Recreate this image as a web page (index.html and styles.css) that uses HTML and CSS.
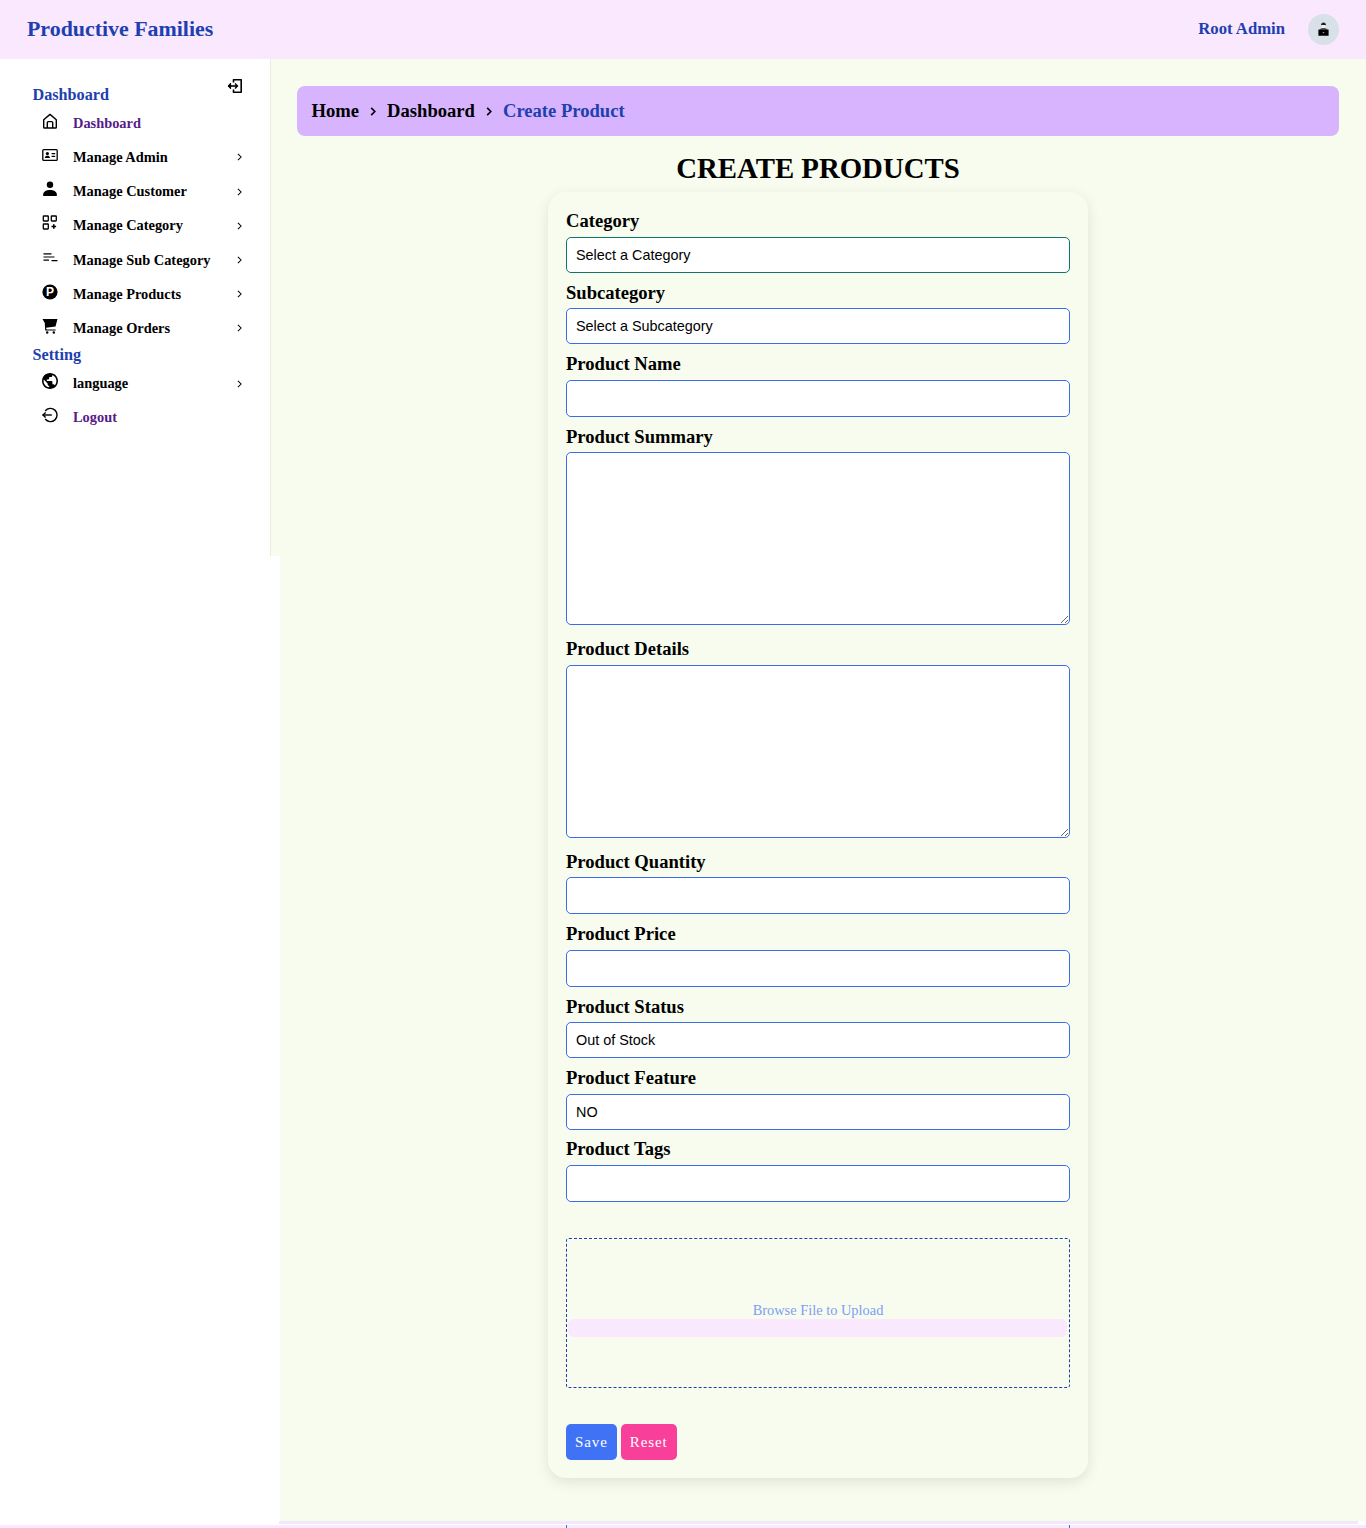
FILE: index.html
```html
<!DOCTYPE html>
<html lang="en">
<head>
  <meta charset="UTF-8" />
  <meta name="viewport" content="width=device-width, initial-scale=1" />
  <title>Productive Families</title>
  <link rel="stylesheet" href="styles.css">
</head>
<body>

  <header class="topbar">
    <a class="brand" href="#">Productive Families</a>
    <div class="user">
      <span class="userName">Root Admin</span>
      <span class="avatar">
        <svg viewBox="0 0 11 14" width="11" height="14">
          <path d="M3 3.200C3 1.200 4.200.4 5.500.4S8 1.200 8 3.200z" fill="#222"/>
          <path d="M3.600 3h3.800v1.200a1.900 1.900 0 0 1-3.800 0z" fill="#eef0f2"/>
          <path d="M1.800 7.800c.3-1.300 1.500-1.900 3.700-1.900s3.400.6 3.700 1.900z" fill="#555"/>
          <rect x=".4" y="7.400" width="10.200" height="6.400" rx=".4" fill="#000"/>
          <rect x="4.800" y="10" width="1.400" height="1.200" fill="#999"/>
        </svg>
      </span>
    </div>
  </header>

  <div class="shell">
    <div class="sideCol">
      <aside class="sidebar">
        <button class="collapseBtn" type="button" aria-label="Collapse">
          <svg viewBox="0 0 16 16" width="16" height="16" fill="none" stroke="#000" stroke-width="1.6">
            <path d="M6.500 4.500V1.800h7.700v12.400H6.500v-2.700" stroke-linejoin="round"/>
            <path d="M1 8h9.400"/>
            <path d="M3.600 5.200 1 8l2.600 2.800z" fill="#000" stroke-width="1"/>
            <path d="M8 5.600 10.400 8 8 10.400" stroke-width="1.400"/>
          </svg>
        </button>

        <h3 class="navHead">Dashboard</h3>
        <ul class="navList">
          <li class="navItem navItem--link">
            <svg class="navIcon" viewBox="0 0 16 16" fill="none" stroke="#000" stroke-width="1.400" stroke-linejoin="round">
              <path d="M1.700 6.800 8 1.400l6.300 5.400v7.400a.8.800 0 0 1-.8.800h-11a.8.800 0 0 1-.8-.8z"/>
              <path d="M5.300 15V9.600a1 1 0 0 1 1-1h3.400a1 1 0 0 1 1 1V15"/>
            </svg>
            <span class="navLabel">Dashboard</span>
          </li>
          <li class="navItem">
            <svg class="navIcon" viewBox="0 0 16 16">
              <rect x=".8" y="2.600" width="14.400" height="10.800" rx="1" fill="none" stroke="#000" stroke-width="1.300"/>
              <circle cx="5.400" cy="6.600" r="1.600"/>
              <path d="M2.800 11c.2-1.600 1.200-2.200 2.600-2.200S7.800 9.400 8 11z"/>
              <path d="M9.600 6h3.600v1.200H9.600zM9.600 8.800h3.600V10H9.600z"/>
            </svg>
            <span class="navLabel">Manage Admin</span>
            <svg class="chev" viewBox="0 0 6 10"><path d="M1 1l4 4-4 4" fill="none" stroke="#000" stroke-width="1.300"/></svg>
          </li>
          <li class="navItem">
            <svg class="navIcon" viewBox="0 0 16 16">
              <circle cx="8" cy="3.800" r="3.200"/>
              <path d="M1.200 15v-1.800C1.200 10.400 4.800 8.900 8 8.900s6.800 1.500 6.800 4.300V15z"/>
            </svg>
            <span class="navLabel">Manage Customer</span>
            <svg class="chev" viewBox="0 0 6 10"><path d="M1 1l4 4-4 4" fill="none" stroke="#000" stroke-width="1.300"/></svg>
          </li>
          <li class="navItem">
            <svg class="navIcon" viewBox="0 0 16 16" fill="none" stroke="#000" stroke-width="1.300">
              <rect x="1.300" y="1" width="5" height="5" rx=".5"/>
              <rect x="9.300" y="1" width="5" height="5" rx=".5"/>
              <rect x="1.300" y="9" width="5" height="5" rx=".5"/>
              <path d="M11.800 9.200v4.600M9.500 11.500h4.600" stroke-width="1.600"/>
            </svg>
            <span class="navLabel">Manage Category</span>
            <svg class="chev" viewBox="0 0 6 10"><path d="M1 1l4 4-4 4" fill="none" stroke="#000" stroke-width="1.300"/></svg>
          </li>
          <li class="navItem">
            <svg class="navIcon" viewBox="0 0 16 16" stroke="#000" stroke-width="1.200">
              <path d="M1.500 3.800h8M1.500 7h11M1.500 10.200h5.500M9.500 10.600h6"/>
            </svg>
            <span class="navLabel">Manage Sub Category</span>
            <svg class="chev" viewBox="0 0 6 10"><path d="M1 1l4 4-4 4" fill="none" stroke="#000" stroke-width="1.300"/></svg>
          </li>
          <li class="navItem">
            <svg class="navIcon" viewBox="0 0 16 16">
              <circle cx="8" cy="8" r="7.600"/>
              <text class="coinLetter" x="8" y="12.200" text-anchor="middle">P</text>
            </svg>
            <span class="navLabel">Manage Products</span>
            <svg class="chev" viewBox="0 0 6 10"><path d="M1 1l4 4-4 4" fill="none" stroke="#000" stroke-width="1.300"/></svg>
          </li>
          <li class="navItem">
            <svg class="navIcon" viewBox="0 0 16 16">
              <path d="M.5 1h15l-2 7.500-9.500 1.200.6 1.700h9v1H3.200L2.800 5z"/>
              <circle cx="5.200" cy="14.500" r="1.200"/>
              <circle cx="11.800" cy="14.500" r="1.200"/>
            </svg>
            <span class="navLabel">Manage Orders</span>
            <svg class="chev" viewBox="0 0 6 10"><path d="M1 1l4 4-4 4" fill="none" stroke="#000" stroke-width="1.300"/></svg>
          </li>
        </ul>

        <h3 class="navHead">Setting</h3>
        <ul class="navList">
          <li class="navItem">
            <svg class="navIcon" viewBox="2 2 20 20">
              <path d="M12 2C6.480 2 2 6.480 2 12s4.480 10 10 10 10-4.480 10-10S17.520 2 12 2zm-1 17.930c-3.950-.49-7-3.850-7-7.930 0-.62.08-1.210.21-1.790L9 15v1c0 1.100.9 2 2 2v1.930zm6.900-2.540c-.26-.81-1-1.390-1.900-1.390h-1v-3c0-.55-.45-1-1-1H8v-2h2c.55 0 1-.45 1-1V7h2c1.100 0 2-.9 2-2v-.41c2.930 1.190 5 4.060 5 7.410 0 2.080-.8 3.970-2.100 5.390z"/>
            </svg>
            <span class="navLabel">language</span>
            <svg class="chev" viewBox="0 0 6 10"><path d="M1 1l4 4-4 4" fill="none" stroke="#000" stroke-width="1.300"/></svg>
          </li>
          <li class="navItem navItem--link">
            <svg class="navIcon" viewBox="0 0 16 16" fill="none" stroke="#000" stroke-width="1.400">
              <path d="M3.200 4A6.600 6.600 0 1 1 3.200 12"/>
              <path d="M.6 8h9.200"/>
              <path d="M3.600 5.400 1 8l2.600 2.600"/>
            </svg>
            <span class="navLabel">Logout</span>
          </li>
        </ul>
      </aside>
    </div>

    <main class="content">
      <nav class="crumbs">
        <a class="crumb" href="#">Home</a>
        <svg class="crumbSep" viewBox="0 0 6 10"><path d="M1 1l4 4-4 4" fill="none" stroke="#000" stroke-width="1.800"/></svg>
        <a class="crumb" href="#">Dashboard</a>
        <svg class="crumbSep" viewBox="0 0 6 10"><path d="M1 1l4 4-4 4" fill="none" stroke="#000" stroke-width="1.800"/></svg>
        <a class="crumb crumb--current" href="#">Create Product</a>
      </nav>

      <h1 class="pageTitle">CREATE PRODUCTS</h1>

      <form class="productForm">
        <label class="fieldLabel" for="category">Category</label>
        <select class="field field--select field--focus" id="category"><option>Select a Category</option></select>

        <label class="fieldLabel" for="subcategory">Subcategory</label>
        <select class="field field--select" id="subcategory"><option>Select a Subcategory</option></select>

        <label class="fieldLabel" for="name">Product Name</label>
        <input class="field" type="text" id="name" />

        <label class="fieldLabel" for="summary">Product Summary</label>
        <textarea class="field field--area" id="summary"></textarea>

        <label class="fieldLabel" for="details">Product Details</label>
        <textarea class="field field--area" id="details"></textarea>

        <label class="fieldLabel" for="quantity">Product Quantity</label>
        <input class="field" type="text" id="quantity" />

        <label class="fieldLabel" for="price">Product Price</label>
        <input class="field" type="text" id="price" />

        <label class="fieldLabel" for="status">Product Status</label>
        <select class="field field--select" id="status"><option>Out of Stock</option></select>

        <label class="fieldLabel" for="feature">Product Feature</label>
        <select class="field field--select" id="feature"><option>NO</option></select>

        <label class="fieldLabel" for="tags">Product Tags</label>
        <input class="field" type="text" id="tags" />

        <div class="dropzone">
          <span class="dropText">Browse File to Upload</span>
          <div class="dropBar"></div>
        </div>

        <div class="formButtons">
          <button class="btn btn--save" type="button">Save</button>
          <button class="btn btn--reset" type="button">Reset</button>
        </div>
      </form>
    </main>
  </div>

  <div class="pageStrip"></div>
  <div class="pageRow"><div class="pageRowMarks"></div></div>

</body>
</html>
```

FILE: styles.css
```css
html, body {
  height: 1528px;
  overflow: hidden;
}
body {
  margin: 0;
  background-color: #fff;
  color: #000;
  font-family: "Liberation Serif", "Times New Roman", serif;
}
a {
  text-decoration: none;
}

/* top bar */
.topbar {
  display: flex;
  align-items: center;
  justify-content: space-between;
  height: 59px;
  box-sizing: border-box;
  padding: 0 27px 1px;
  background-color: #fae8ff;
}
.brand {
  font-size: 21.9px;
  font-weight: 700;
  color: #1e40af;
}
.user {
  display: flex;
  align-items: center;
  gap: 23px;
}
.userName {
  font-size: 16.7px;
  font-weight: 700;
  color: #1e40af;
}
.avatar {
  display: flex;
  align-items: center;
  justify-content: center;
  width: 31px;
  height: 31px;
  border-radius: 50%;
  background-color: #d9e1e8;
}

/* layout */
.shell {
  display: flex;
  height: 1462px;
}
.sideCol {
  flex: 0 0 280px;
  height: 497px;
  background-color: #f7fcee;
}
.sidebar {
  position: relative;
  width: 271px;
  height: 100%;
  box-sizing: border-box;
  padding: 25px 0 0 32.5px;
  background-color: #fff;
  border-right: 1px solid #e9eedd;
}
.collapseBtn {
  position: absolute;
  top: 19px;
  left: 227px;
  padding: 0;
  border: none;
  background: none;
}
.collapseBtn svg {
  display: block;
}
.navHead {
  margin: 0;
  padding-top: 1.5px;
  font-size: 16.2px;
  line-height: 19px;
  font-weight: 700;
  color: #1e40af;
}
.navList {
  margin: 0.7px 0 0;
  padding: 0;
  list-style: none;
}
.navItem {
  display: flex;
  align-items: center;
  height: 34.2px;
  box-sizing: border-box;
  padding: 2px 0 0 9.7px;
  font-size: 14.4px;
  font-weight: 700;
}
.navItem--link {
  color: #581c87;
}
.navIcon {
  flex: none;
  width: 16px;
  height: 16px;
  margin: -5px 14.8px 0 0;
}
.navLabel {
  flex: 1;
}
.chev {
  flex: none;
  width: 5px;
  height: 8px;
  margin-right: 28px;
}
.coinLetter {
  font-family: "Liberation Sans", Arial, sans-serif;
  font-size: 12px;
  font-weight: 700;
  fill: #fff;
}

/* main */
.content {
  flex: 1;
  min-width: 0;
  box-sizing: border-box;
  padding: 27px 27px 0 17px;
  background-color: #f7fcee;
}
.crumbs {
  display: flex;
  align-items: center;
  height: 50px;
  box-sizing: border-box;
  padding-left: 14.6px;
  border-radius: 8px;
  background-color: #d8b4fe;
}
.crumb {
  font-size: 18.6px;
  font-weight: 700;
  color: #000;
}
.crumb--current {
  color: #1e40af;
}
.crumbSep {
  width: 6px;
  height: 9px;
  margin: 0 11px;
}
.pageTitle {
  margin: 14px 0 6px;
  text-align: center;
  font-size: 28.8px;
  line-height: 36px;
  font-weight: 700;
}
.productForm {
  width: 540px;
  margin: 0 auto;
  box-sizing: border-box;
  padding: 18px;
  border-radius: 18px;
  background-color: #f7fcee;
  box-shadow: 0 4px 14px rgba(0, 0, 0, 0.1);
}
.fieldLabel {
  display: block;
  height: 27px;
  box-sizing: border-box;
  padding-top: 0.4px;
  font-size: 18.6px;
  line-height: 22px;
  font-weight: 700;
}
.field {
  display: block;
  width: 100%;
  height: 37px;
  box-sizing: border-box;
  margin: 0 0 8.45px;
  padding: 0 9px;
  border: 1px solid #3b6ce9;
  border-radius: 5px;
  background-color: #fff;
  color: #000;
  font-family: "Liberation Sans", Arial, sans-serif;
  font-size: 14.4px;
}
.field--select {
  height: 36px;
  appearance: none;
}
.field--focus {
  border-color: #0f766e;
}
.field--area {
  height: 173px;
  margin-bottom: 12.5px;
}
.dropzone {
  height: 150px;
  box-sizing: border-box;
  margin-top: 35.85px;
  padding: 62px 1px 0;
  border: 1px dashed #1e40af;
  border-radius: 3px;
  text-align: center;
}
.dropText {
  display: block;
  height: 18px;
  font-size: 14.4px;
  line-height: 18px;
  color: #7f9cf5;
}
.dropBar {
  height: 18px;
  margin-right: 1px;
  border-radius: 6px;
  background-color: #fae8ff;
}
.formButtons {
  display: flex;
  gap: 4px;
  margin-top: 36px;
}
.btn {
  height: 36px;
  padding: 1px 9px 0;
  border: none;
  border-radius: 5px;
  color: #fff;
  font-family: "Liberation Serif", serif;
  font-size: 15px;
  letter-spacing: 0.9px;
}
.btn--save {
  background-color: #3f72f5;
}
.btn--reset {
  background-color: #f83f9a;
}

/* the sliver of the next screen at the page bottom */
.pageStrip {
  height: 3px;
  margin: 0 8px 0 279px;
  background-color: #f3e8fb;
}
.pageRow {
  height: 4px;
  margin-top: 1px;
  background-color: #fae8ff;
}
.pageRowMarks {
  width: 502px;
  height: 4px;
  margin-left: 566px;
  border: dashed #3b6ce9;
  border-width: 0 1px;
}
```
